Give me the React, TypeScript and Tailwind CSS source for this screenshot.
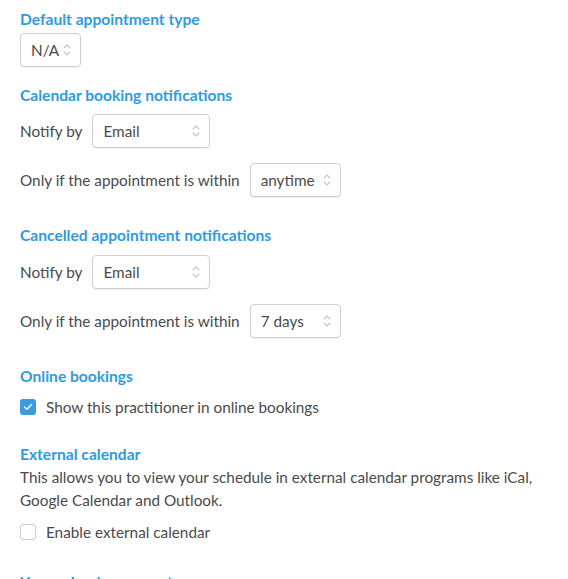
import React from 'react';

function Chevrons() {
  return (
    <svg width="8" height="14" viewBox="0 0 8 14" fill="none" stroke="#c4c4c4" strokeWidth="1.1" strokeLinecap="round" strokeLinejoin="round">
      <path d="M1 5 L4 2 L7 5" />
      <path d="M1 9 L4 12 L7 9" />
    </svg>
  );
}

function FakeSelect({ value, width }: { value: string; width: string }) {
  return (
    <div
      className={`${width} h-[34px] flex items-center justify-between pl-[10px] pr-[9px] border border-[#cfcfcf] rounded-[4px] bg-white shadow-[0_1px_1px_rgba(0,0,0,0.06)]`}
    >
      <span>{value}</span>
      <Chevrons />
    </div>
  );
}

function Heading({ children, className = '' }: { children: React.ReactNode; className?: string }) {
  return <h3 className={`text-[15.6px] leading-[20px] font-bold text-[#2e9be0] ${className}`}>{children}</h3>;
}

function Checkbox({ checked }: { checked: boolean }) {
  if (checked) {
    return (
      <span className="w-[16px] h-[16px] rounded-[3px] bg-[#3a9be0] flex items-center justify-center">
        <svg width="10" height="8" viewBox="0 0 10 8" fill="none" stroke="white" strokeWidth="1.4" strokeLinecap="round" strokeLinejoin="round">
          <path d="M1.5 4 L4 6.3 L8.5 1.5" />
        </svg>
      </span>
    );
  }
  return <span className="w-[16px] h-[16px] rounded-[3px] border border-[#cfcfcf] bg-white" />;
}

export default function App() {
  return (
    <div className="px-5 pt-[9px] text-[15.3px] text-[#4a4a4a] bg-white h-[579px] overflow-hidden" style={{ fontFamily: 'Lato, "Noto Sans", sans-serif' }}>
      <Heading>Default appointment type</Heading>
      <div className="mt-[4px]">
        <FakeSelect value="N/A" width="w-[61px]" />
      </div>

      <Heading className="mt-[18px]">Calendar booking notifications</Heading>
      <div className="mt-[9px] flex items-center gap-[10px]">
        <span>Notify by</span>
        <FakeSelect value="Email" width="w-[118px]" />
      </div>
      <div className="mt-[15px] flex items-center gap-[10px]">
        <span>Only if the appointment is within</span>
        <FakeSelect value="anytime" width="w-[91px]" />
      </div>

      <Heading className="mt-[28px]">Cancelled appointment notifications</Heading>
      <div className="mt-[10px] flex items-center gap-[10px]">
        <span>Notify by</span>
        <FakeSelect value="Email" width="w-[118px]" />
      </div>
      <div className="mt-[15px] flex items-center gap-[10px]">
        <span>Only if the appointment is within</span>
        <FakeSelect value="7 days" width="w-[91px]" />
      </div>

      <Heading className="mt-[28px]">Online bookings</Heading>
      <label className="mt-[11px] h-[20px] flex items-center gap-[10px]">
        <Checkbox checked />
        <span>Show this practitioner in online bookings</span>
      </label>

      <Heading className="mt-[27px]">External calendar</Heading>
      <p className="mt-[2px] leading-[23px]">
        This allows you to view your schedule in external calendar programs like iCal, Google Calendar and Outlook.
      </p>
      <label className="mt-[10px] h-[20px] flex items-center gap-[10px]">
        <Checkbox checked={false} />
        <span>Enable external calendar</span>
      </label>

      <Heading className="mt-[30px]">Your calendar account</Heading>
    </div>
  );
}
